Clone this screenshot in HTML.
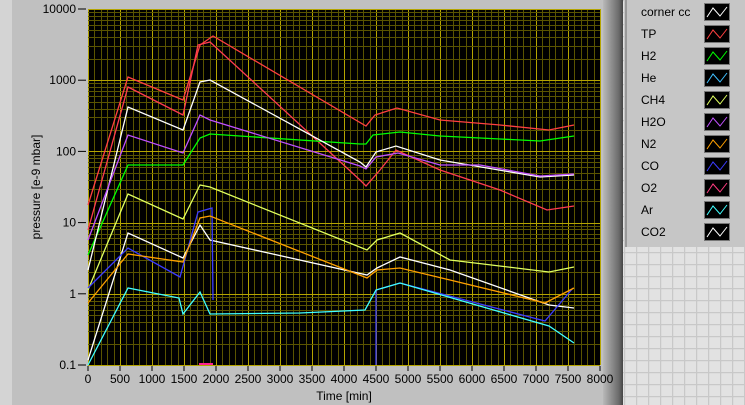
<!DOCTYPE html>
<html><head><meta charset="utf-8"><style>
html,body{margin:0;padding:0;width:745px;height:405px;overflow:hidden;background:#c0c0c0;font-family:"Liberation Sans",sans-serif;}
.lg{position:absolute;left:625px;top:0;width:120px;height:247px;background:#c6c6c6;border-left:2px solid #9a9a9a;box-sizing:border-box;}
.row{position:absolute;left:14px;font-size:12px;color:#000;}
.sw{position:absolute;left:77px;width:26px;height:18px;background:#000;border:1px solid #777;box-sizing:border-box;}
</style></head><body>
<svg width="745" height="405" style="position:absolute;left:0;top:0">
<defs>
<pattern id="g" x="624" y="0" width="12" height="12" patternUnits="userSpaceOnUse">
<rect width="12" height="12" fill="#e2e2e2"/><path d="M0 0.5H12M0.5 0V12" stroke="#c8c8c8" stroke-width="1.5"/>
</pattern>
<linearGradient id="sh" x1="0" x2="1"><stop offset="0" stop-color="#b8b8b8"/><stop offset="0.8" stop-color="#6a6a6a"/><stop offset="1" stop-color="#444"/></linearGradient>
</defs>
<rect x="0" y="0" width="12" height="405" fill="#d4d4d4"/>
<rect x="603" y="0" width="20" height="405" fill="url(#sh)"/>
<rect x="623" y="0" width="122" height="405" fill="url(#g)"/>
<rect x="88" y="9" width="512" height="356" fill="#000"/>
<g id="grid"></g>
<g fill="none" stroke-width="1.3">
<polyline stroke="#ff4040" points="88,205 128,77 183,100 200,45 213,36 366,126 375,115 397,108 440,120 500,125 549,130 574,125"/>
<polyline stroke="#ff3c50" points="88,230 128,87 183,115 198,45 210,42 360,180 366,186 380,170 396,150 440,170 500,190 547,210 574,206"/>
<polyline stroke="#00ff00" points="88,255 128,165 183,165 200,138 210,134 360,144 366,144 373,135 400,132 440,136 500,139 540,141 574,136"/>
<polyline stroke="#ffffff" points="88,270 128,107 183,130 200,82 210,80 360,162 366,167 376,152 396,146 440,160 540,177 574,175"/>
<polyline stroke="#c050ff" points="88,240 128,135 183,153 200,115 210,120 360,166 366,169 376,157 398,153 440,165 480,165 540,176 574,174"/>
<polyline stroke="#e0ff60" points="88,290 128,194 183,219 200,185 210,187 367,250 377,240 400,233 450,260 549,272 574,267"/>
<polyline stroke="#ffffff" points="88,360 128,233 183,258 200,225 210,240 367,275 377,268 400,257 450,270 549,305 574,308"/>
<polyline stroke="#3c3cff" points="88,288 128,248 180,277 198,212 212,208 213,300"/>
<polyline stroke="#3c3cff" points="376,365 376,290 400,283 545,321 573,288"/>
<polyline stroke="#ffa000" points="88,303 128,254 183,262 200,218 210,216 367,278 377,270 400,268 450,280 545,303 574,288"/>
<polyline stroke="#40ffff" points="88,365 128,288 179,298 183,314 200,292 210,314 300,313 365,310 376,290 400,283 549,326 574,343"/>
<polyline stroke="#ff2090" stroke-width="2" points="199,364 213,364"/>
</g>
<g font-size="12" fill="#000" text-anchor="end" id="yl"></g>
<g font-size="12" fill="#000" text-anchor="middle" id="xl"></g>
<text x="344" y="400" font-size="12" text-anchor="middle">Time [min]</text>
<text transform="translate(40,187) rotate(-90)" font-size="12" text-anchor="middle">pressure [e-9 mbar]</text>
</svg>
<div class="lg">
<div class="row" style="top:5px">corner cc</div><div class="sw" style="top:3px"><svg width="24" height="16"><polyline points="2,13 8,4 15,12 22,3" fill="none" stroke="#fff"/></svg></div>
</div>
<script>
var ns="http://www.w3.org/2000/svg",g=document.getElementById("grid");
function ln(x1,y1,x2,y2,c){var l=document.createElementNS(ns,"line");l.setAttribute("x1",x1);l.setAttribute("y1",y1);l.setAttribute("x2",x2);l.setAttribute("y2",y2);l.setAttribute("stroke",c);l.setAttribute("stroke-width","1");g.appendChild(l);}
for(var t=0;t<=8000;t+=100){var x=Math.round(88+t*0.064)+0.5;ln(x,9,x,365,t%500==0?"#b4a400":"#5a5400");}
for(var d=0;d<5;d++){for(var k=1;k<10;k++){var y=Math.round(365-71.2*(d+Math.log10(k)))+0.5;ln(88,y,600,y,k==1?"#b4a400":"#5a5400");}}
ln(88,9.5,600,9.5,"#b4a400");
var yl=document.getElementById("yl"),labs=["0.1","1","10","100","1000","10000"];
for(var i=0;i<6;i++){var y=365-71.2*i;var t=document.createElementNS(ns,"text");t.setAttribute("x",76);t.setAttribute("y",y+4);t.textContent=labs[i];yl.appendChild(t);var l=document.createElementNS(ns,"line");l.setAttribute("x1",78);l.setAttribute("x2",86);l.setAttribute("y1",y);l.setAttribute("y2",y);l.setAttribute("stroke","#000");yl.appendChild(l);}
var xl=document.getElementById("xl");
for(var v=0;v<=8000;v+=500){var x=88+v*0.064;var t=document.createElementNS(ns,"text");t.setAttribute("x",x);t.setAttribute("y",383);t.textContent=v;xl.appendChild(t);var l=document.createElementNS(ns,"line");l.setAttribute("x1",x);l.setAttribute("x2",x);l.setAttribute("y1",366);l.setAttribute("y2",371);l.setAttribute("stroke","#000");xl.appendChild(l);}
var names=["TP","H2","He","CH4","H2O","N2","CO","O2","Ar","CO2"],cols=["#ff4040","#00ff00","#40c0ff","#e0ff60","#c050ff","#ffa000","#3c3cff","#ff3c80","#40ffff","#ffffff"];
var lg=document.querySelector(".lg");
for(var i=0;i<10;i++){var yy=3+22*(i+1);var r=document.createElement("div");r.className="row";r.style.top=(yy+2)+"px";r.textContent=names[i];lg.appendChild(r);var s=document.createElement("div");s.className="sw";s.style.top=yy+"px";s.innerHTML='<svg width="24" height="16"><polyline points="2,13 8,4 15,12 22,3" fill="none" stroke="'+cols[i]+'"/></svg>';lg.appendChild(s);}
</script>
</body></html>
